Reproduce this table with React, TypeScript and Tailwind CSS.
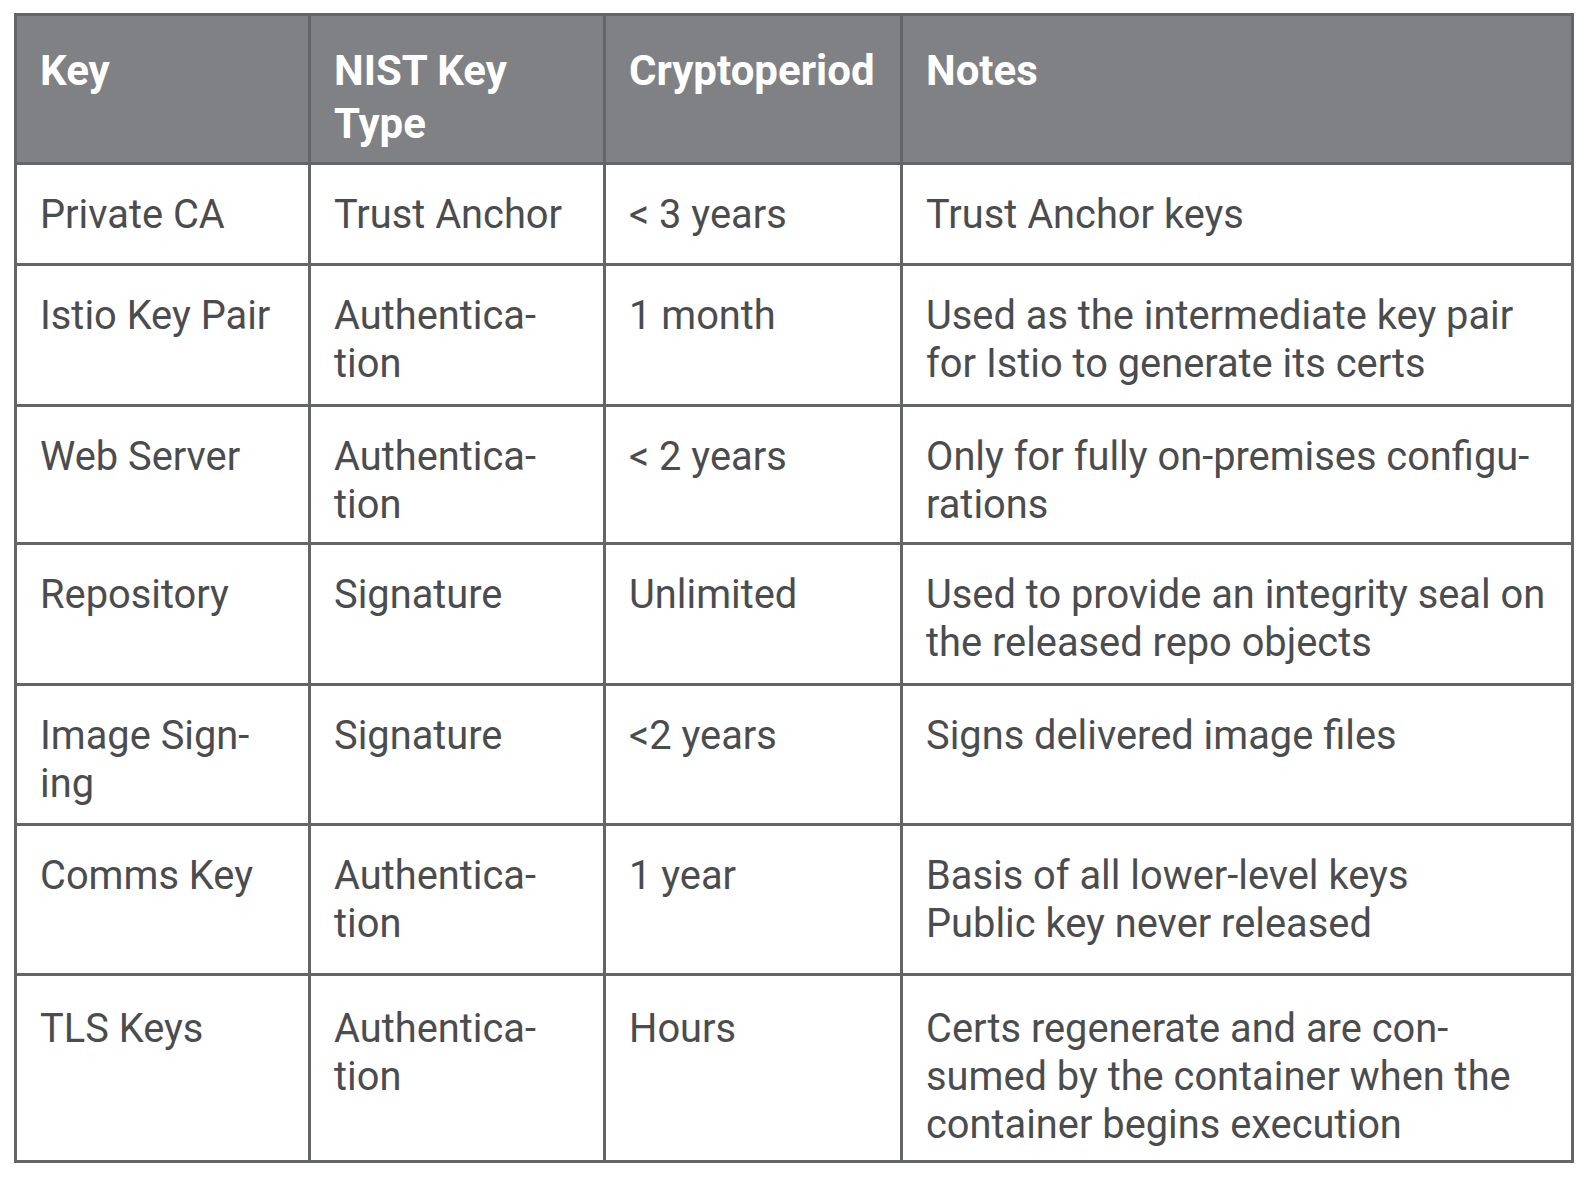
import React from 'react'

const headers = ['Key', ['NIST Key', 'Type'], 'Cryptoperiod', 'Notes']

const rows: (string | string[])[][] = [
    ['Private CA', 'Trust Anchor', '< 3 years', 'Trust Anchor keys'],
    ['Istio Key Pair', ['Authentica-', 'tion'], '1 month', ['Used as the intermediate key pair', 'for Istio to generate its certs']],
    ['Web Server', ['Authentica-', 'tion'], '< 2 years', ['Only for fully on-premises configu-', 'rations']],
    ['Repository', 'Signature', 'Unlimited', ['Used to provide an integrity seal on', 'the released repo objects']],
    [['Image Sign-', 'ing'], 'Signature', '<2 years', 'Signs delivered image files'],
    ['Comms Key', ['Authentica-', 'tion'], '1 year', ['Basis of all lower-level keys', 'Public key never released']],
    ['TLS Keys', ['Authentica-', 'tion'], 'Hours', ['Certs regenerate and are con-', 'sumed by the container when the', 'container begins execution']],
]

function Lines({ value }: { value: string | string[] }) {
    const lines = Array.isArray(value) ? value : [value]
    return (
        <>
            {lines.map((l, i) => (
                <div key={i} className="whitespace-pre">{l}</div>
            ))}
        </>
    )
}

export default function App() {
    return (
        <div className="min-h-screen bg-white pt-[13px] pl-[14px]" style={{ fontFamily: 'Roboto, "Noto Sans", sans-serif' }}>
            <div className="grid w-fit grid-cols-[291px_292px_294px_668px] grid-rows-[146px_98px_138px_135px_138px_137px_147px_184px] gap-[3px] bg-[#646568] p-[3px]">
                {headers.map((h, i) => (
                    <div key={i} className="bg-[#808184] pl-[23px] pt-[28px] text-[42px] font-bold leading-[53px] text-white">
                        <Lines value={h} />
                    </div>
                ))}
                {rows.map((row, r) =>
                    row.map((cell, c) => (
                        <div
                            key={`${r}-${c}`}
                            className={`bg-white pl-[23px] text-[39.8px] leading-[48px] text-[#4b4c4e] ${r === rows.length - 1 ? 'pt-[29px]' : 'pt-[26px]'}`}
                        >
                            <Lines value={cell} />
                        </div>
                    ))
                )}
            </div>
        </div>
    )
}
